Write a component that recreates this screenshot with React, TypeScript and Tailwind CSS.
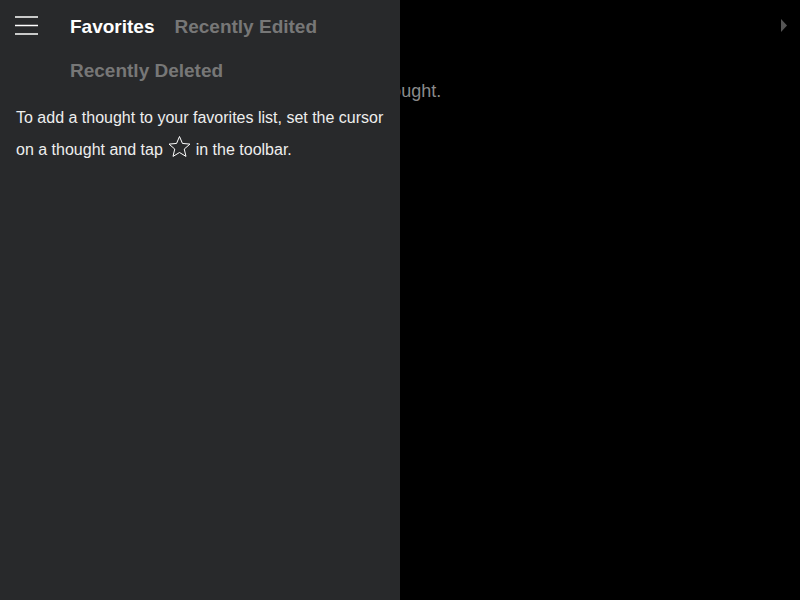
import React from "react"

const font = { fontFamily: '"Liberation Sans", Arial, sans-serif' }

function StarIcon() {
  return (
    <svg width="23" height="21" viewBox="0 0 23 21" className="inline-block align-[-2px] ml-px">
      <polygon
        points="11.5,0.5 14.44,7.45 21.96,8.1 16.26,13.05 17.97,20.4 11.5,16.5 5.03,20.4 6.74,13.05 1.04,8.1 8.56,7.45"
        fill="none"
        stroke="white"
        strokeWidth="1"
        strokeLinejoin="round"
      />
    </svg>
  )
}

export default function App() {
  const tabs = [
    { label: "Favorites", active: true },
    { label: "Recently Edited", active: false },
    { label: "Recently Deleted", active: false },
  ]

  return (
    <div className="relative h-screen w-full overflow-hidden bg-black" style={font}>
      {/* thoughtspace behind the drawer */}
      <div className="flex flex-col">
        <div className="flex justify-end pt-[19px] pr-[13px]">
          <svg width="6" height="13" viewBox="0 0 6 13">
            <polygon points="0,0 6,6.5 0,13" fill="#555" />
          </svg>
        </div>
        <p className="mt-[47px] pl-[193px] text-[18px] leading-[24px] text-[#8a8a8a]">Hit Enter to add a new thought.</p>
      </div>

      {/* sidebar drawer */}
      <div className="absolute left-0 top-0 h-full w-[400px] bg-[#28292b]">
        <div className="flex items-start">
          <div className="w-[70px] shrink-0 pl-[15px] pt-[16px]">
            <svg width="24" height="19" viewBox="0 0 24 19">
              <line x1="0" y1="1" x2="23" y2="1" stroke="white" strokeWidth="1.5" />
              <line x1="0" y1="9.5" x2="23" y2="9.5" stroke="white" strokeWidth="1.5" />
              <line x1="0" y1="18" x2="23" y2="18" stroke="white" strokeWidth="1.5" />
            </svg>
          </div>
          <div className="flex flex-wrap gap-x-5 gap-y-4 pt-[13px]">
            {tabs.map(t => (
              <span key={t.label}
                className={"text-[19px] leading-[28px] font-bold " + (t.active ? "text-white" : "text-[#777777]")}>
                {t.label}
              </span>
            ))}
          </div>
        </div>
        <p className="mt-[17px] pl-4 pr-3 text-[16px] leading-[32px] text-[#eeeeee]">
          To add a thought to your favorites list, set the cursor on a thought and tap <StarIcon /> in the toolbar.
        </p>
      </div>
    </div>
  )
}
